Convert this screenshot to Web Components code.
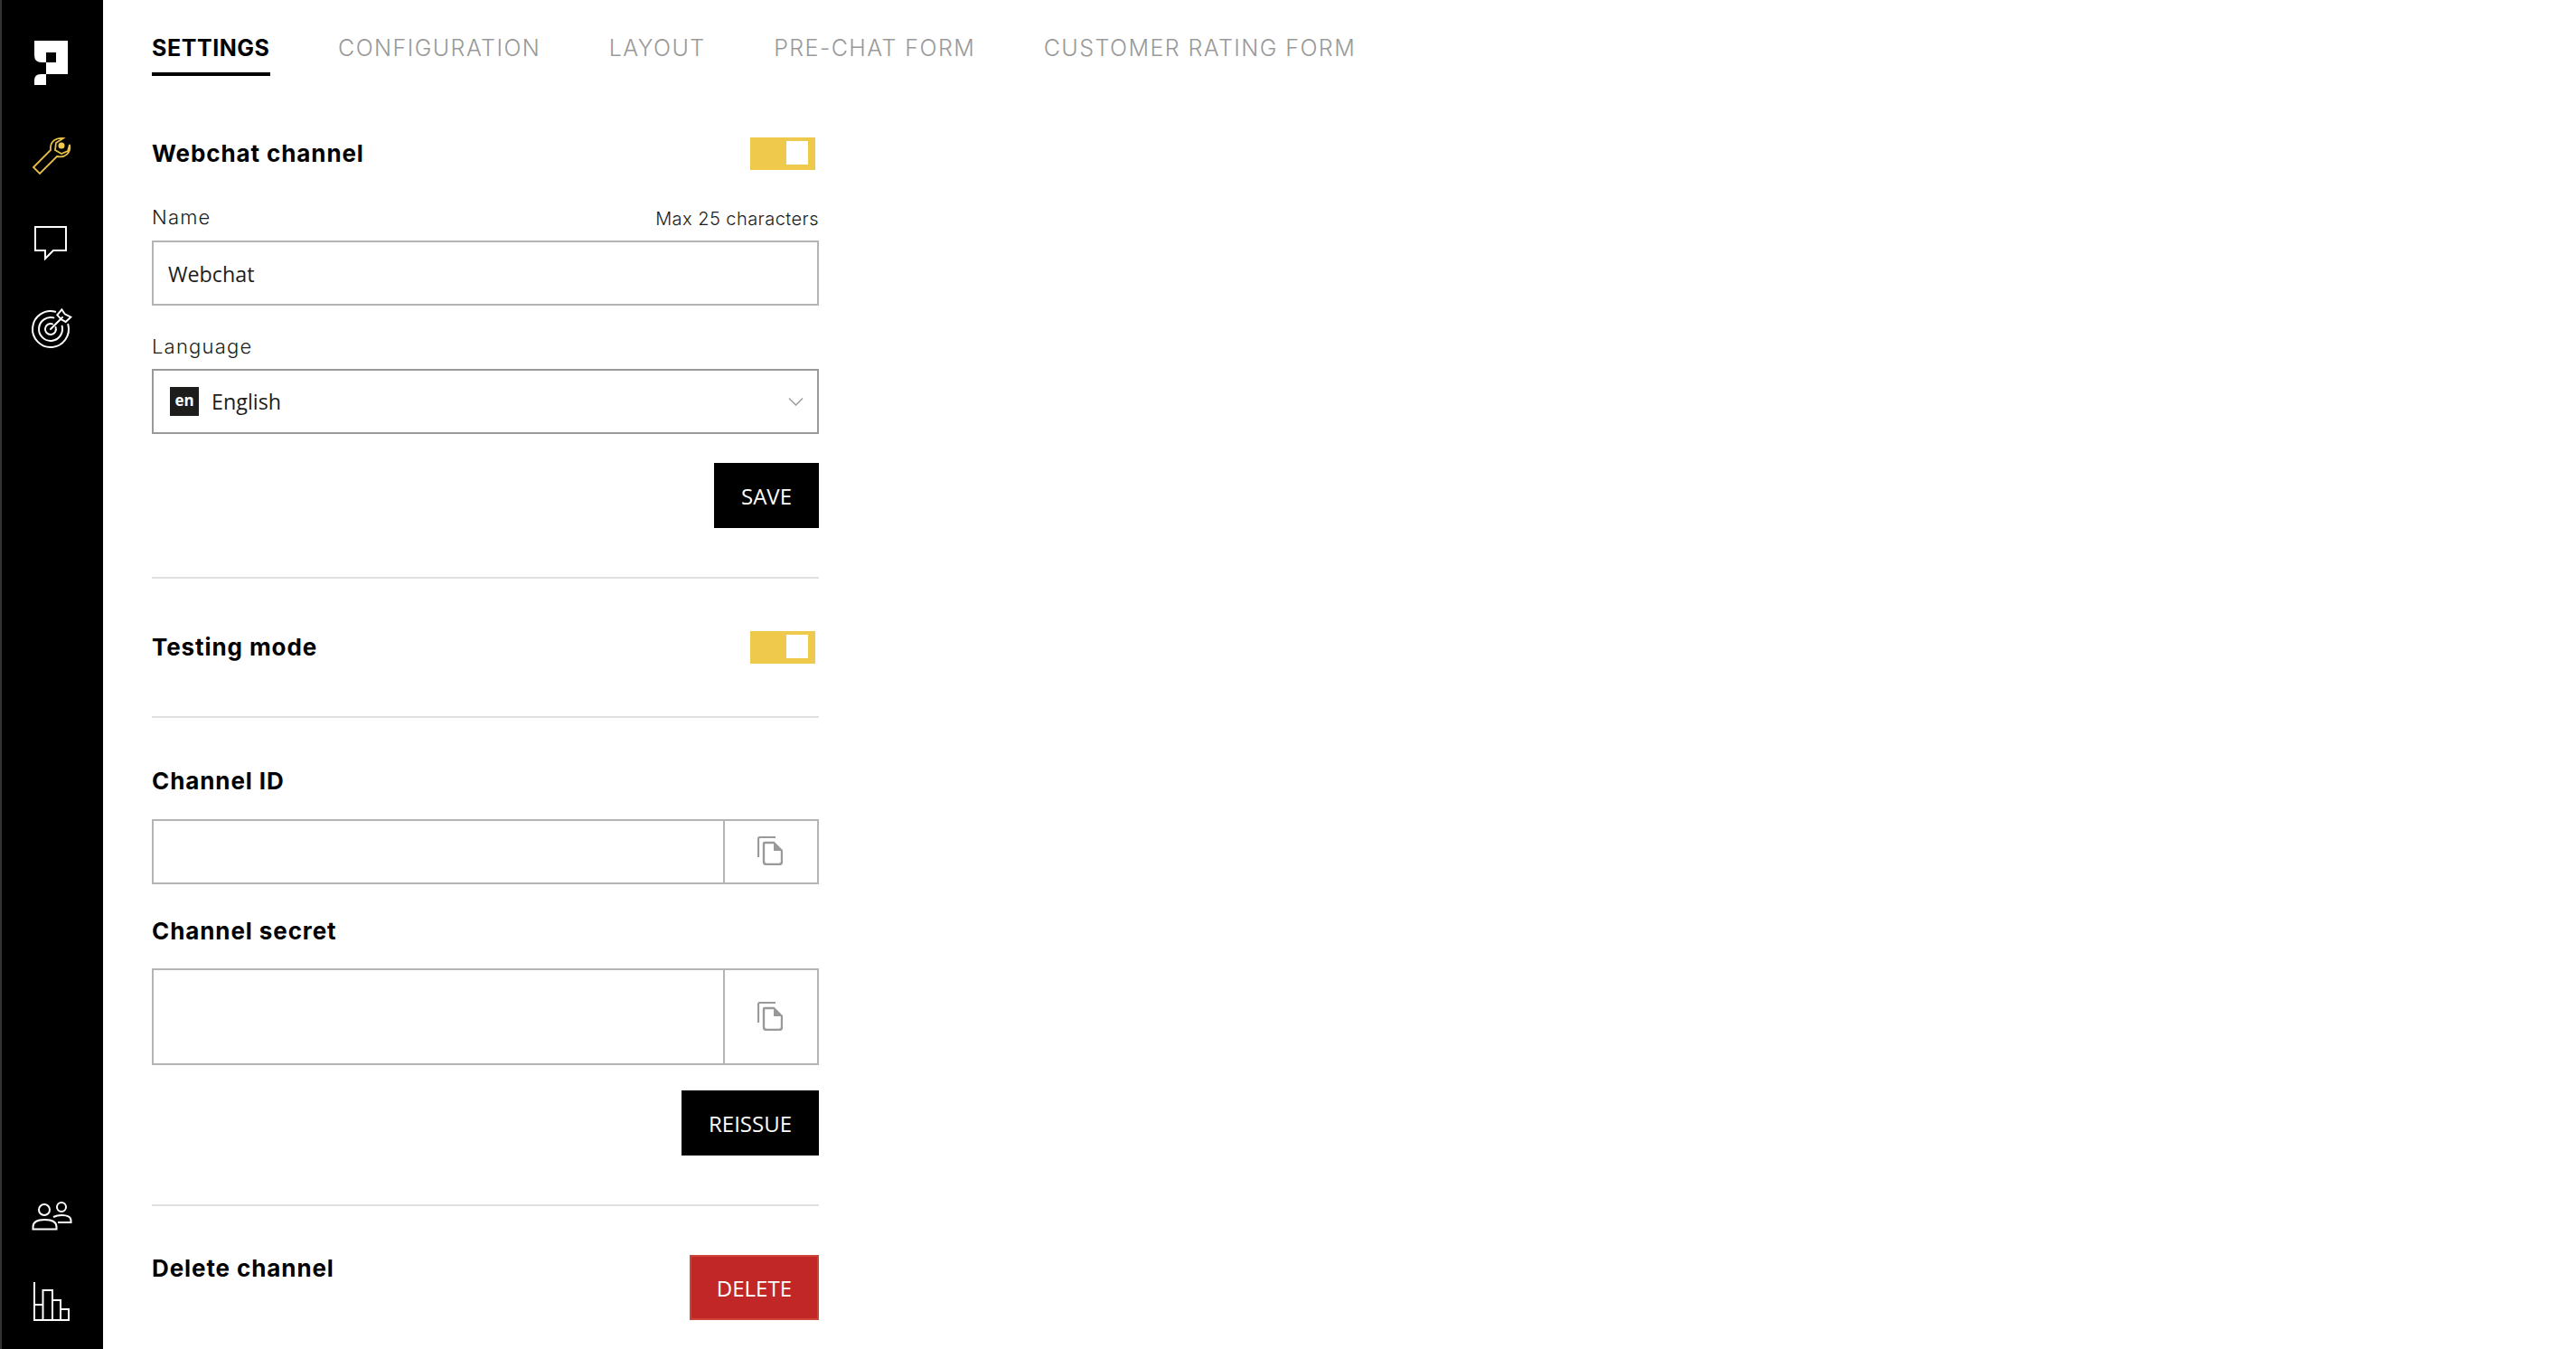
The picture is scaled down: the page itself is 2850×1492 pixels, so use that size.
<!DOCTYPE html>
<html>
<head>
<meta charset="utf-8">
<style>
  html, body { margin: 0; padding: 0; height: 100%; background: #fff; overflow: hidden; }
  body { font-family: "Open Sans", sans-serif; color: #000; }
</style>
</head>
<body>
<app-shell>
  <side-nav slot="nav">
    <nav-icon name="logo"></nav-icon>
    <nav-icon name="wrench" style="margin-top:40px"></nav-icon>
    <nav-icon name="chat" style="margin-top:30px"></nav-icon>
    <nav-icon name="target" style="margin-top:30px"></nav-icon>
    <nav-icon name="users" slot="bottom"></nav-icon>
    <nav-icon name="chart" slot="bottom" style="margin-top:30px"></nav-icon>
  </side-nav>
  <tab-bar>
    <tab-item active>SETTINGS</tab-item>
    <tab-item>CONFIGURATION</tab-item>
    <tab-item>LAYOUT</tab-item>
    <tab-item>PRE-CHAT FORM</tab-item>
    <tab-item>CUSTOMER RATING FORM</tab-item>
  </tab-bar>
  <channel-settings></channel-settings>
</app-shell>

<script>
const ICONS = {
  logo: {
    box: "25 35 65 65",
    body: `<path fill="#fff" fill-rule="evenodd" d="M38 45H75V82H51V69H46Q38 69 38 61ZM51 58V69H62V58Z"/>
           <path fill="#fff" d="M51 82V94H38V89Q38 82 45 82Z"/>`
  },
  wrench: {
    box: "25 140 65 65",
    body: `<path fill="none" stroke="#e6bf45" stroke-width="1.800" stroke-linejoin="miter" d="M37 185L56 166C55 158 60 152 70 153L62 158L61 166L68 170L75 167L77 160C79 169 72 175 63 173L44 192Z"/>
           <circle cx="68" cy="161" r="3.500" fill="#efc94c"/>`
  },
  chat: {
    box: "25 235 65 65",
    body: `<path fill="none" stroke="#fff" stroke-width="2" d="M39 251H73V277H59L50 286V277H39Z"/>`
  },
  target: {
    box: "25 330 65 65",
    body: `<g fill="none" stroke="#fff" stroke-width="2" stroke-linecap="round">
             <path d="M75.300 358.800A20 20 0 1 1 61.200 344.700"/>
             <path d="M68.600 360.600A13 13 0 1 1 59.400 351.400"/>
             <path d="M61.600 362A6 6 0 1 1 58 358.400"/>
             <path d="M56 364L69 351"/>
             <path stroke-linejoin="miter" d="M63.300 348.300L68.300 342.300L71.700 347.300L78.300 350.700L72.700 356L67.700 353.300Z"/>
           </g>`
  },
  users: {
    box: "25 1315 65 65",
    body: `<g fill="none" stroke="#fff" stroke-width="2">
             <circle cx="49" cy="1338" r="6"/>
             <path d="M36.500 1359.500V1357C36.500 1351 43 1349 49.500 1349S62.500 1351 62.500 1357V1359.500Z"/>
             <circle cx="68" cy="1335" r="5"/>
             <path d="M59 1346C62 1344.500 65 1344 68.500 1344C74 1344 78.500 1346 78.500 1350V1352H64"/>
           </g>`
  },
  chart: {
    box: "25 1410 65 65",
    body: `<path fill="none" stroke="#fff" stroke-width="2" d="M38 1418V1460H76V1448H67V1460M67 1448V1438H58V1460M58 1438V1427H47.500V1460M47.500 1443H38"/>`
  }
};

customElements.define("nav-icon", class extends HTMLElement {
  constructor() {
    super();
    this.attachShadow({ mode: 'open' });
  }
  connectedCallback() {
    const icon = ICONS[this.getAttribute("name")];
    this.shadowRoot.innerHTML = `
      <style>
      :host { display: block; width: 65px; height: 65px; }
      svg { display: block; width: 65px; height: 65px; }
      </style>
      <svg viewBox="${icon.box}">${icon.body}</svg>`;
  }
});

customElements.define("side-nav", class extends HTMLElement {
  constructor() {
    super();
    this.attachShadow({ mode: 'open' });
    this.shadowRoot.innerHTML = `
      <style>
      :host {
        display: flex;
        flex-direction: column;
        justify-content: space-between;
        box-sizing: border-box;
        width: 114px;
        height: 100vh;
        background: #000;
        border-left: 2px solid #333;
        padding: 35px 0 17px 23px;
      }
      </style>
      <div><slot></slot></div>
      <div><slot name="bottom"></slot></div>`;
  }
});

customElements.define("app-shell", class extends HTMLElement {
  constructor() {
    super();
    this.attachShadow({ mode: 'open' });
    this.shadowRoot.innerHTML = `
      <style>
      :host { display: flex; height: 100vh; }
      main { flex: 1; padding-left: 54px; }
      </style>
      <slot name="nav"></slot>
      <main><slot></slot></main>`;
  }
});

customElements.define("tab-bar", class extends HTMLElement {
  constructor() {
    super();
    this.attachShadow({ mode: 'open' });
    this.shadowRoot.innerHTML = `
      <style>
      :host { display: flex; gap: 75.500px; padding-top: 38px; }
      </style>
      <slot></slot>`;
  }
});

customElements.define("tab-item", class extends HTMLElement {
  constructor() {
    super();
    this.attachShadow({ mode: 'open' });
    this.shadowRoot.innerHTML = `
      <style>
      :host {
        display: block;
        font: 300 25px/30px Inter, sans-serif;
        letter-spacing: 1.450px;
        color: #999;
        padding-bottom: 12px;
        border-bottom: 4px solid transparent;
        white-space: nowrap;
      }
      :host([active]) {
        color: #000;
        font-weight: 700;
        letter-spacing: .550px;
        border-bottom-color: #000;
      }
      </style>
      <slot></slot>`;
  }
});

customElements.define("toggle-switch", class extends HTMLElement {
  constructor() {
    super();
    this.attachShadow({ mode: 'open' });
    this.shadowRoot.innerHTML = `
      <style>
      :host {
        display: flex;
        justify-content: flex-end;
        box-sizing: border-box;
        width: 72px;
        height: 36px;
        margin-right: 4px;
        padding: 4px 8px 6px 0;
        background: #efc94c;
      }
      i { display: block; width: 24px; height: 26px; background: #fff; }
      </style>
      <i></i>`;
  }
});

customElements.define("text-box", class extends HTMLElement {
  constructor() {
    super();
    this.attachShadow({ mode: 'open' });
    this.shadowRoot.innerHTML = `
      <style>
      :host {
        display: flex;
        align-items: center;
        box-sizing: border-box;
        height: 72px;
        padding: 2px 16px 0;
        border: 2px solid #b4b4b4;
        font: 400 23.300px/30px "Open Sans", sans-serif;
        color: #1d1d1b;
      }
      </style>
      <slot></slot>`;
  }
});

customElements.define("lang-select", class extends HTMLElement {
  constructor() {
    super();
    this.attachShadow({ mode: 'open' });
    this.shadowRoot.innerHTML = `
      <style>
      :host {
        display: flex;
        align-items: center;
        box-sizing: border-box;
        height: 72px;
        padding: 0 15px 0 18px;
        border: 2px solid #999;
        font: 400 23.300px/30px "Open Sans", sans-serif;
        color: #1d1d1b;
      }
      b {
        display: flex;
        align-items: center;
        justify-content: center;
        box-sizing: border-box;
        width: 32px;
        height: 32px;
        margin-right: 14px;
        padding-bottom: 3px;
        background: #1d1d1b;
        color: #fff;
        font: 700 17px/28px "Open Sans", sans-serif;
      }
      span { flex: 1; }
      svg { display: block; width: 17px; height: 10px; }
      </style>
      <b>en</b>
      <span><slot></slot></span>
      <svg viewBox="0 0 17 10"><path d="M1 1.500L8.500 9L16 1.500" fill="none" stroke="#a0a0a0" stroke-width="1.600"/></svg>`;
  }
});

customElements.define("copy-field", class extends HTMLElement {
  constructor() {
    super();
    this.attachShadow({ mode: 'open' });
    this.shadowRoot.innerHTML = `
      <style>
      :host {
        display: flex;
        box-sizing: border-box;
        height: 72px;
        border: 2px solid #b4b4b4;
      }
      div { flex: 1; }
      button {
        display: flex;
        align-items: center;
        justify-content: center;
        width: 104px;
        padding: 0 2px 2px 0;
        background: #fff;
        border: 0;
        border-left: 2px solid #b4b4b4;
      }
      svg { display: block; width: 28px; height: 32px; }
      </style>
      <div></div>
      <button aria-label="Copy">
        <svg viewBox="0 0 28 32">
          <path d="M1 23V3Q1 1 3 1H20" fill="none" stroke="#999" stroke-width="2.200"/>
          <path d="M8 7H18L27 16V28Q27 31 24 31H10Q7 31 7 28V8Q7 7 8 7Z" fill="none" stroke="#999" stroke-width="2.400"/>
          <path d="M18 7L27 16H18Z" fill="#999"/>
        </svg>
      </button>`;
  }
});

customElements.define("action-button", class extends HTMLElement {
  constructor() {
    super();
    this.attachShadow({ mode: 'open' });
    this.shadowRoot.innerHTML = `
      <style>
      :host {
        display: flex;
        align-items: center;
        box-sizing: border-box;
        height: 72px;
        padding: 1px 30px 0;
        background: #000;
        color: #fff;
        font: 500 24px/30px "Open Sans", sans-serif;
        white-space: nowrap;
      }
      :host([danger]) {
        background: #c12727;
        border: 2px solid #cc4338;
        padding: 1px 28px 0;
      }
      </style>
      <slot></slot>`;
  }
});

customElements.define("channel-settings", class extends HTMLElement {
  constructor() {
    super();
    this.attachShadow({ mode: 'open' });
    this.shadowRoot.innerHTML = `
      <style>
      :host { display: block; width: 738px; }
      .row { display: flex; justify-content: space-between; align-items: center; }
      .end { display: flex; justify-content: flex-end; }
      h2 {
        margin: 0;
        font: 700 26px/30px Inter, sans-serif;
        letter-spacing: .900px;
        color: #000;
      }
      label {
        font: 300 22px/24px Inter, sans-serif;
        letter-spacing: 1.200px;
        color: #1d1d1b;
      }
      small {
        padding-top: 4px;
        font: 300 20px/20px Inter, sans-serif;
        letter-spacing: .450px;
        color: #1d1d1b;
      }
      hr { margin: 54px 0 0; border: 0; height: 2px; background: #e0e0e0; }
      </style>
      <div class="row" style="margin-top:68px;height:36px">
        <h2>Webchat channel</h2>
        <toggle-switch></toggle-switch>
      </div>
      <div class="row" style="margin-top:40px">
        <label>Name</label>
        <small>Max 25 characters</small>
      </div>
      <text-box style="margin-top:14px">Webchat</text-box>
      <div style="margin-top:33px;height:24px"><label>Language</label></div>
      <lang-select style="margin-top:13px">English</lang-select>
      <div class="end" style="margin-top:32px"><action-button>SAVE</action-button></div>
      <hr>
      <div class="row" style="margin-top:58px;height:36px">
        <h2>Testing mode</h2>
        <toggle-switch></toggle-switch>
      </div>
      <hr style="margin-top:58px">
      <h2 style="margin-top:55px">Channel ID</h2>
      <copy-field style="margin-top:27px"></copy-field>
      <h2 style="margin-top:37px">Channel secret</h2>
      <copy-field style="margin-top:26px;height:107px"></copy-field>
      <div class="end" style="margin-top:28px"><action-button>REISSUE</action-button></div>
      <hr>
      <div class="row" style="margin-top:54px;align-items:flex-start">
        <h2>Delete channel</h2>
        <action-button danger>DELETE</action-button>
      </div>`;
  }
});
</script>
</body>
</html>
